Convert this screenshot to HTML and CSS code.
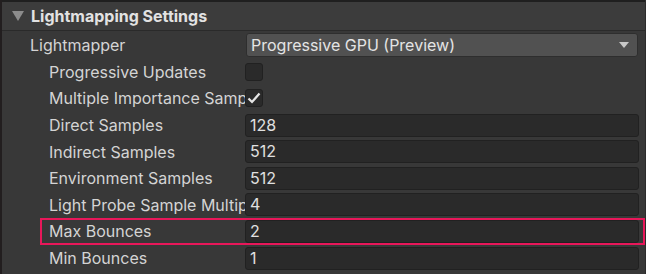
FILE: index.html
```html
<!DOCTYPE html>
<html lang="en">
<head>
    <meta charset="UTF-8">
    <title>Lightmapping Settings</title>
    <link rel="stylesheet" href="styles.css">
</head>
<body>
    <div class="panel">
        <div class="header">
            <span class="foldout"></span>
            <span class="title">Lightmapping Settings</span>
        </div>

        <div class="rows">
            <div class="row">
                <span class="label">Lightmapper</span>
                <div class="dropdown">
                    <span>Progressive GPU (Preview)</span>
                    <span class="arrow"></span>
                </div>
            </div>

            <div class="row sub">
                <span class="label">Progressive Updates</span>
                <span class="checkbox"></span>
            </div>

            <div class="row sub">
                <span class="label">Multiple Importance Sampling</span>
                <span class="checkbox">
                    <svg width="14" height="12" viewBox="0 0 14 12"><path d="M1.5 6.5 L5 10 L12.5 1.5" fill="none" stroke="#e6e6e6" stroke-width="2.2"/></svg>
                </span>
            </div>

            <div class="row sub">
                <span class="label">Direct Samples</span>
                <div class="field">128</div>
            </div>

            <div class="row sub">
                <span class="label">Indirect Samples</span>
                <div class="field">512</div>
            </div>

            <div class="row sub">
                <span class="label">Environment Samples</span>
                <div class="field">512</div>
            </div>

            <div class="row sub">
                <span class="label">Light Probe Sample Multiplier</span>
                <div class="field">4</div>
            </div>

            <div class="row sub highlight">
                <span class="label">Max Bounces</span>
                <div class="field">2</div>
            </div>

            <div class="row sub">
                <span class="label">Min Bounces</span>
                <div class="field">1</div>
            </div>
        </div>
    </div>
</body>
</html>
```

FILE: styles.css
```css
body {
    margin: 0;
    background-color: #383838;
    font-family: Inter, "Noto Sans", sans-serif;
    font-size: 16px;
    color: #d4d4d4;
}

.panel {
    width: 646px;
    height: 274px;
    box-sizing: border-box;
    border-left: 2px solid #221e1f;
    border-right: 1px solid #2c2c2c;
    overflow: hidden;
}

.header {
    display: flex;
    align-items: center;
    height: 28px;
    border-top: 2px solid #1f1f1f;
    border-bottom: 1px solid #2a2a2a;
    background-color: #3c3c3c;
}

.foldout {
    width: 0;
    height: 0;
    margin-left: 10px;
    margin-right: 7px;
    border-left: 6px solid transparent;
    border-right: 6px solid transparent;
    border-top: 10px solid #8c8c8c;
}

.title {
    font-weight: bold;
    color: #e2e2e2;
}

.rows {
    padding-top: 1px;
}

.row {
    display: flex;
    align-items: center;
    height: 26.6px;
    padding-left: 28px;
    padding-right: 6px;
    box-sizing: border-box;
}

.row.sub {
    padding-left: 47px;
}

.label {
    width: 196px;
    padding-right: 1px;
    box-sizing: border-box;
    flex: none;
    white-space: nowrap;
    overflow: hidden;
}

.row:first-child .label {
    width: 216px;
}

.dropdown {
    flex: 1;
    display: flex;
    align-items: center;
    justify-content: space-between;
    height: 22px;
    margin-right: 1px;
    padding: 0 8px 0 4px;
    background-color: #515151;
    border: 1px solid #2e2e2e;
    border-radius: 3px;
    color: #e4e4e4;
}

.arrow {
    width: 0;
    height: 0;
    border-left: 5px solid transparent;
    border-right: 5px solid transparent;
    border-top: 6px solid #c8c8c8;
}

.checkbox {
    display: flex;
    align-items: center;
    justify-content: center;
    width: 18px;
    height: 18px;
    box-sizing: border-box;
    background-color: #2a2a2a;
    border: 1px solid #212121;
    border-radius: 3px;
}

.field {
    flex: 1;
    height: 23px;
    box-sizing: border-box;
    padding-left: 4px;
    line-height: 21px;
    background-color: #2a2a2a;
    border: 1px solid #212121;
    border-radius: 3px;
    color: #e0e0e0;
}

.row.highlight {
    margin-left: 38px;
    padding-left: 9px;
    outline: 2px solid #e8175a;
    outline-offset: -2px;
}
```
